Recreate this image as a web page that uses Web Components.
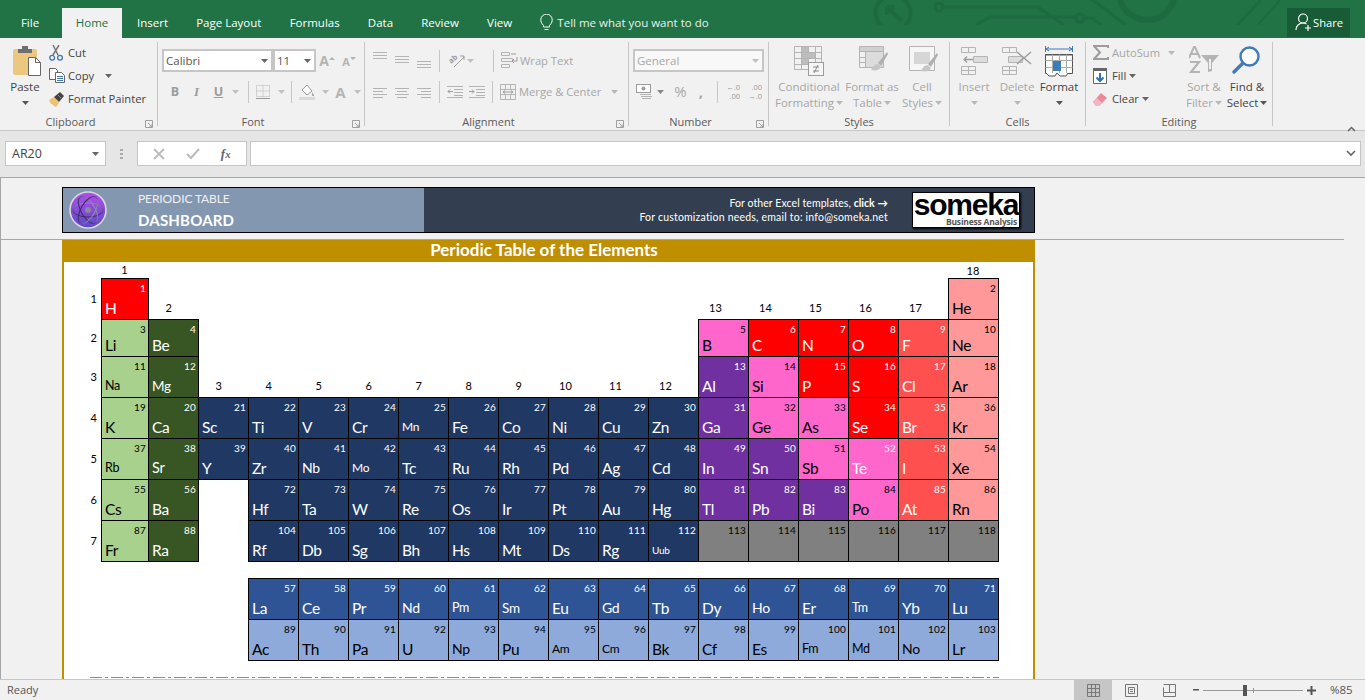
<!DOCTYPE html>
<html><head><meta charset="utf-8"><title>Periodic Table</title>
<style>html,body{margin:0;padding:0;width:1365px;height:700px;overflow:hidden;background:#f1f1f1}</style>
</head><body>
<x-app></x-app>
<script>
const UI="'Open Sans','Noto Sans',sans-serif", CAL="Lato,'Open Sans',sans-serif";
const G='#b4b4b4', GD='#9c9c9c';
function def(name,css,html){
  customElements.define(name,class extends HTMLElement{
    constructor(){super();this.attachShadow({mode:'open'});}
    connectedCallback(){
      const h=typeof html==='function'?html(this):html;
      this.shadowRoot.innerHTML='<style>'+css+'</style>'+h;
    }
  });
}
const svg=(w,h,body,extra='')=>`<svg width="${w}" height="${h}" viewBox="0 0 ${w} ${h}" ${extra}>${body}</svg>`;
const lines=(arr,c=G)=>arr.map(a=>`<path d="M${a[0]} ${a[1]+.5}H${a[2]}" stroke="${c}" fill="none"/>`).join('');
const caret=(c='#777')=>svg(7,4,`<path d="M0 0h7L3.5 4z" fill="${c}"/>`);
const I={
 paste:svg(29,31,`<rect x="0" y="3" width="24" height="26" rx="2" fill="#ecc77f"/><path d="M5 3h14v4H5z" fill="#6e6e6e"/><path d="M9 0h6v4H9z" fill="#6e6e6e"/><path d="M15.5 11.5h7l5 5v13h-12z" fill="#fff" stroke="#666"/><path d="M22.5 11.5v5h5" fill="none" stroke="#666"/>`,'style="margin-left:4px"'),
 cut:svg(15,16,`<path d="M4 0l5 10M10 0L4 10" stroke="#777" stroke-width="1.5" fill="none"/><circle cx="3.2" cy="12.8" r="2.4" fill="none" stroke="#3d78b8" stroke-width="1.3"/><circle cx="11" cy="12.8" r="2.4" fill="none" stroke="#3d78b8" stroke-width="1.3"/>`),
 copy:svg(16,15,`<path d="M.5.5h6l2 2v9h-8z" fill="#fff" stroke="#666"/><path d="M6.5 4.5h6l3 3v7h-9z" fill="#fff" stroke="#666"/><path d="M8 8.5h6M8 10.5h6M8 12.5h6" stroke="#3d78b8"/>`),
 painter:svg(16,16,`<path d="M0 9l5-3 5 6-3 4-2-1-2-2-1 0z" fill="#eec26f"/><path d="M5 6l6-5 4 4-5 6z" fill="#444"/><path d="M9 4l3 3" stroke="#888"/>`),
 growA:`<span style="font:700 14px ${UI};color:${G}">A</span>`,
 bold:`<span style="font:700 12.5px ${UI};color:${GD}">B</span>`,
 ital:`<span style="font:italic 700 13px 'Liberation Serif',serif;color:${GD}">I</span>`,
 und:`<span style="font:700 12.5px ${UI};color:${GD};text-decoration:underline">U</span>`,
 borders:svg(14,14,`<path d="M.5.5h13v11H.5zM7 .5v11M.5 6h13" fill="none" stroke="${G}" stroke-dasharray="1 1"/><path d="M0 13.5h14" stroke="#999"/>`),
 fill:svg(16,16,`<path d="M3 6l5-5 5 6-5 4z" fill="#fff" stroke="#999"/><path d="M13 8l2 3v1h-2z" fill="#aaa"/><path d="M0 13h16v3H0z" fill="#d9d9d9"/>`),
 fontA:`<span style="font:700 15px ${UI};color:${G}">A</span>`,
 orient:svg(17,15,`<text transform="translate(3 11) rotate(-40)" style="font:700 7.5px ${UI}" fill="${GD}">ab</text><path d="M6 14L16 4M12 3h4v4" stroke="${GD}" fill="none"/>`,'style="overflow:visible"'),
 wrap:svg(17,18,`<path d="M.5.5h8v3h-8zM.5 6.5h11v3H.5zM.5 12.5h8v3h-8z" fill="none" stroke="${G}"/><path d="M10 2h5M16 5v4h-5M13 7l-2 2 2 2" stroke="${GD}" fill="none"/>`),
 merge:svg(16,16,`<path d="M.5.5h15v15H.5zM.5 5.5h15M.5 10.5h15M5.5.5v5M10.5.5v5M5.5 10.5v5M10.5 10.5v5" fill="none" stroke="${G}"/><path d="M3 8h10M3 8l2-1.5M3 8l2 1.5M13 8l-2-1.5M13 8l-2 1.5" stroke="${GD}" fill="none"/>`),
 outdent:svg(16,12,lines([[0,0,16],[7,3,16],[7,6,16],[7,9,16],[0,11,16]])+`<path d="M6 5.5H1M3 3.5l-2 2 2 2" stroke="${GD}" fill="none"/>`),
 indent:svg(16,12,lines([[0,0,16],[7,3,16],[7,6,16],[7,9,16],[0,11,16]])+`<path d="M0 5.5h5M3 3.5l2 2-2 2" stroke="${GD}" fill="none"/>`),
 cur:svg(17,16,`<rect x=".5" y=".5" width="14" height="8" fill="#fff" stroke="${GD}"/><circle cx="7.5" cy="4.5" r="2" fill="${GD}"/><path d="M4 10.5h11M5 12.5h11M6 14.5h9" stroke="${G}"/>`),
 cf:svg(30,31,`<g fill="none" stroke="${G}"><path d="M.5.5h27v23H.5zM7.5.5v23M14.5.5v23M21.5.5v23M.5 6.5h27M.5 12.5h27M.5 18.5h27"/></g><path d="M8 1h6v5H8zM8 7h13v5H8zM8 13h6v5H8z" fill="#bdbdbd"/><rect x="14.5" y="16.5" width="15" height="13" fill="#f5f5f5" stroke="${GD}"/><path d="M19 21h6M19 25h6M24 19l-4 8" stroke="#888" fill="none"/>`),
 fat:svg(30,31,`<g fill="none" stroke="${G}"><path d="M.5.5h24v21H.5zM6.5.5v21M12.5.5v21M18.5.5v21M.5 5.5h24M.5 11.5h24M.5 16.5h24"/></g><path d="M1 1h23v4H1z" fill="#d0d0d0"/><path d="M7 6h17v15H7z" fill="#dcdcdc"/><path d="M29 8l-1-2-9 11 3 3z" fill="#b0b0b0"/><path d="M19 18c-4 0-5 3-7 6 5 1 9 0 10-3z" fill="#c6c6c6"/>`,'style="margin-left:4px"'),
 cs:svg(30,31,`<path d="M.5.5h25v24H.5z" fill="#f6f6f6" stroke="${G}"/><path d="M5 6h16v12H5z" fill="#d6d6d6"/><path d="M29 9l-1-2-9 11 3 3z" fill="#b0b0b0"/><path d="M19 19c-4 0-5 3-7 6 5 1 9 0 10-3z" fill="#c6c6c6"/>`,'style="margin-left:4px"'),
 ins:svg(28,29,`<g fill="none" stroke="${G}"><path d="M1.5 1.5h14v5h-14zM8.5 1.5v5M1.5 20.5h14v8h-14zM1.5 24.5h14M8.5 20.5v8"/><path d="M13.5 10.5h14v6h-14zM18.5 10.5v6M23.5 10.5v6"/></g><path d="M14 11h13v5H14z" fill="#ddd"/><path d="M13 13.5H4M7 10.5l-3 3 3 3" stroke="${GD}" stroke-width="1.3" fill="none"/>`),
 del:svg(30,29,`<g fill="none" stroke="${G}"><path d="M.5 1.5h14v5H.5zM7.5 1.5v5M.5 20.5h14v8H.5zM.5 24.5h14M7.5 20.5v8M6.5 10.5h14v6h-14z"/></g><path d="M7 11h13v5H7z" fill="#ddd"/><path d="M15 6l14 12M29 6L15 18" stroke="${GD}" stroke-width="1.5" fill="none"/>`),
 fmt:svg(29,31,`<path d="M1 3h26M1 3l3-2M1 3l3 2M27 3l-3-2M27 3l-3 2M.5 0v6M27.5 0v6" stroke="#3d78b8" fill="none"/><path d="M.5 8.5h27v19H.5z" fill="#fff" stroke="#555"/><path d="M.5 8.5h27v1H.5z" fill="#555"/><path d="M.5 14.5h27M.5 21.5h27M7.5 8.5v19M14.5 8.5v19M21.5 8.5v19" stroke="#aaa" fill="none"/><rect x="8" y="15" width="8" height="10" fill="#3f7ab9"/><path d="M1 27l3 3h6l2-3M12 27l3 3h6l2-3" fill="#fff" stroke="#555"/>`),
 sum:svg(16,15,`<path d="M15 3V1H1l6 6.5L1 14h14v-2" fill="none" stroke="${GD}" stroke-width="2"/>`),
 filld:svg(14,16,`<path d="M.5.5h13v15H.5z" fill="#fff" stroke="#666"/><path d="M0 0h14v3H0z" fill="#666"/><path d="M7 5v8M3.5 9.5L7 13l3.5-3.5" stroke="#2f6fb3" stroke-width="2" fill="none"/>`),
 eraser:svg(14,14,`<path d="M0 10l8-9 6 5-8 8H3z" fill="#ea8a9a"/><path d="M0 10l4-4 5 5-3 3H3z" fill="#f3b7c1"/>`),
 sort:svg(30,28,`<path d="M0 12L5 1h1l5 11M2.5 8h6" stroke="${G}" stroke-width="2" fill="none"/><path d="M1 16h9L2 26h9" stroke="${G}" stroke-width="2.2" fill="none"/><path d="M12 9h18l-7 8v8l-4 1v-9z" fill="${G}"/><path d="M20 13h2v10h-2z" fill="#f1f1f1"/>`),
 find:svg(28,28,`<circle cx="17.5" cy="10.5" r="9" fill="#fff" stroke="#3f7ab9" stroke-width="2.4"/><path d="M10.5 17.5L2 26" stroke="#3f7ab9" stroke-width="3.4" stroke-linecap="round"/>`,'style="margin-right:3px"')
};
const ALIGN=(a)=>svg(14,23,lines(a));
/* ---- tab bar ---- */
def('x-tabbar',`
:host{display:flex;height:38px;background:#217346;position:relative;overflow:hidden;font:11.5px ${UI};color:#fff;flex:none}
.bg{position:absolute;left:0;top:0}
.tab{height:30px;margin-top:8px;padding:0 14.1px 1px;display:flex;align-items:center;line-height:1;position:relative;box-sizing:border-box}
.file{width:62px;justify-content:center;padding:0 2px 1px 0}
.home{width:60px;background:#f1f1f1;color:#217346;justify-content:center;padding:0 0 1px}
.insert{padding-left:15px}
.tell{gap:4px;color:#e8f1ec}
.share{margin-left:auto;margin-right:15px;width:63px;height:29px;background:#185c37;display:flex;align-items:center;gap:1px;padding:0 0 1px 8px;box-sizing:border-box;margin-top:8px;position:relative;font-size:11.2px}
`,`
<svg class="bg" width="1365" height="25" viewBox="0 0 1365 25" fill="none" stroke="#1e6a40" stroke-width="3">
<circle cx="893" cy="13" r="17.5" stroke-width="4"/><path d="M887 7h8M887 7v8M887 7l15 14" stroke-width="4"/>
<circle cx="939" cy="7" r="4"/><path d="M943 7h95l26 18"/><path d="M976 25l14-8h85"/><circle cx="1080" cy="18" r="4"/><path d="M1084 18h8l9 7"/>
<path d="M1090-2l36 27M1140-2l-18 0"/><circle cx="1147" cy="-8" r="28" stroke-width="6"/><path d="M1237 25l24-25"/><path d="M1258 25l22-25" stroke-width="2"/>
</svg>
<div class="tab file">File</div><div class="tab home">Home</div><div class="tab insert">Insert</div><div class="tab">Page Layout</div><div class="tab">Formulas</div><div class="tab">Data</div><div class="tab">Review</div><div class="tab">View</div>
<div class="tab tell">${svg(13,17,`<path d="M3.5 11.5C1 9 .8 7 .8 5.8a5.7 5.7 0 0 1 11.4 0c0 1.2-.2 3.2-2.7 5.7v1.500h-6zM4.500 15.500h4" fill="none" stroke="#fff"/>`)}<span>Tell me what you want to do</span></div>
<div class="share">${svg(17,18,`<circle cx="8" cy="5.5" r="4.5" fill="none" stroke="#fff" stroke-width="1.2"/><path d="M1 17c0-4 3-7 7-7 1.5 0 2.5.4 3.5 1" fill="none" stroke="#fff" stroke-width="1.2"/><path d="M13 12v6M10 15h6" stroke="#fff" stroke-width="1.2"/>`)}<span>Share</span></div>
`);
/* ---- ribbon pieces ---- */
def('r-group',`
:host{display:flex;flex-direction:column;height:84px;border-right:1px solid #c6c6c6;box-sizing:border-box;flex:none;position:relative}
.c{flex:1;min-height:0;display:flex}
.l{height:13px;text-align:center;font:11px/13px ${UI};color:#5a5a5a;position:relative;top:2px;white-space:nowrap}
.has{padding-right:16px}
.lch{position:absolute;right:4px;bottom:-6px}
`,h=>`<div class="c"><slot></slot></div><div class="l ${h.hasAttribute('launch')?'has':''}">${h.getAttribute('label')}</div>${h.hasAttribute('launch')?`<span class="lch">${svg(8,8,`<path d="M.5.5h7v7M.5.5v7h7M3 3l4 4M7 4v3H4" fill="none" stroke="#a0a0a0"/>`)}</span>`:''}`);
def('r-big',`
:host{display:flex;flex-direction:column;align-items:center;flex:none;font:11.5px/16px ${UI};color:#a6a6a6;white-space:nowrap}
:host([on]){color:#444}
.i{height:30px;margin-top:4px;margin-bottom:3px;display:flex;align-items:flex-start;justify-content:center}
.t{text-align:center}
.t>div{height:16px;display:flex;align-items:center;justify-content:center}
.car{display:flex;margin-left:2px}
`,h=>{const c=h.getAttribute('on')!==null?'#555':'#b8b8b8';
 const a=(h.getAttribute('label')||'').split('|');
 const cs=`<span class="car">${caret(c)}</span>`;
 return `<div class="i"><slot></slot></div><div class="t"><div>${a[0]}</div>${a[1]!==undefined?`<div><span>${a[1]}</span>${cs}</div>`:`<div>${cs}</div>`}</div>`});
def('r-small',`
:host{display:flex;align-items:center;height:23px;font:11.2px/23px ${UI};color:#444;white-space:nowrap;flex:none}
:host([off]){color:#a6a6a6}
.i{width:var(--iw,19px);display:flex;align-items:center;flex:none}
.car{margin-left:var(--cm,5px);display:flex}
`,h=>`<span class="i"><slot></slot></span><span>${h.getAttribute('label')}</span>${h.hasAttribute('car')?`<span class="car">${caret(h.hasAttribute('off')?'#b8b8b8':'#666')}</span>`:''}`);
def('r-combo',`
:host{display:flex;align-items:center;justify-content:space-between;height:23px;background:#fff;border:1px solid #c6c6c6;outline:1px solid #c6c6c6;outline-offset:-2px;box-sizing:border-box;padding:0 4px 0 3px;font:11.5px ${UI};color:#555;flex:none}
:host([off]){background:#f8f8f8;color:#a6a6a6}
`,h=>`<span>${h.getAttribute('label')}</span>${caret(h.hasAttribute('off')?'#c0c0c0':'#666')}`);
def('x-ribbon',`
:host{display:flex;height:93px;box-sizing:border-box;background:#f1f1f1;border-bottom:1px solid #c6c6c6;padding-top:4px;flex:none;position:relative}
.col{display:flex;flex-direction:column;margin-top:-1px}
.row{display:flex;align-items:center;height:23px}
.two{display:flex;flex-direction:column;gap:8px;padding-top:7px}
.sep{width:1px;height:22px;background:#c6c6c6;flex:none}
.ic{display:flex;justify-content:center;align-items:center;height:23px;flex:none}
.pc{color:#a8a8a8;font:15px ${UI};line-height:23px;text-align:center}
.dec{font:7.5px/9px ${UI};color:#9a9a9a;display:flex;flex-direction:column;align-items:flex-end;width:15px}
.up{position:absolute;right:9px;top:80px}
`,`
<r-group label="Clipboard" launch style="width:158px">
 <r-big on label="Paste" style="width:40px;margin:0 0 0 5px">${I.paste}</r-big>
 <div class="col" style="margin-left:4px">
  <r-small label="Cut">${I.cut}</r-small>
  <r-small label="Copy" car style="--cm:11px">${I.copy}</r-small>
  <r-small label="Format Painter">${I.painter}</r-small>
 </div>
</r-group>
<r-group label="Font" launch style="width:207px">
 <div class="two" style="padding-left:4px">
  <div class="row"><r-combo label="Calibri" style="width:111px"></r-combo><r-combo label="11" style="width:43px"></r-combo>
   <span class="ic" style="width:22px">${I.growA}${svg(6,9,`<path d="M0 4l3-3 3 3z" fill="${G}"/>`)}</span><span class="ic" style="width:22px"><span style="font:700 11px ${UI};color:${G};padding-top:2px">A</span>${svg(6,9,`<path d="M0 1h6L3 4z" fill="${G}"/>`)}</span></div>
  <div class="row" style="padding-left:4px">
   <span class="ic" style="width:18px">${I.bold}</span><span class="ic" style="width:25px">${I.ital}</span><span class="ic" style="width:19px">${I.und}</span><span class="ic" style="width:15px">${caret('#c0c0c0')}</span>
   <span class="ic" style="width:5px"></span><span class="sep"></span>
   <span class="ic" style="width:28px">${I.borders}</span><span class="ic" style="width:8px">${caret('#c0c0c0')}</span><span class="ic" style="width:6px"></span><span class="sep"></span>
   <span class="ic" style="width:30px">${I.fill}</span><span class="ic" style="width:7px">${caret('#c0c0c0')}</span><span class="ic" style="width:23px">${I.fontA}</span><span class="ic" style="width:11px">${caret('#c0c0c0')}</span>
  </div>
 </div>
</r-group>
<r-group label="Alignment" launch style="width:264px">
 <div class="two" style="padding-left:8px">
  <div class="row">
   ${ALIGN([[0,3,14],[0,6,14],[0,9,14]])}<span style="width:8px"></span>${ALIGN([[0,7,14],[0,10,14],[0,13,14]])}<span style="width:8px"></span>${ALIGN([[0,12,14],[0,15,14],[0,18,14]])}
   <span class="sep" style="margin-left:8px"></span><span class="ic" style="width:17px;margin-left:8px">${I.orient}</span><span class="ic" style="width:7px;margin-left:2px">${caret('#c0c0c0')}</span><span class="sep" style="margin-left:19px"></span>
   <r-small off label="Wrap Text" style="margin-left:7px">${I.wrap}</r-small>
  </div>
  <div class="row">
   ${ALIGN([[0,8,14],[0,11,10],[0,14,14],[0,17,10]])}<span style="width:8px"></span>${ALIGN([[0,8,14],[2,11,12],[0,14,14],[2,17,12]])}<span style="width:8px"></span>${ALIGN([[0,8,14],[4,11,14],[0,14,14],[4,17,14]])}
   <span class="sep" style="margin-left:8px"></span><span class="ic" style="width:16px;margin-left:7px">${I.outdent}</span><span class="ic" style="width:16px;margin-left:6px">${I.indent}</span><span class="sep" style="margin-left:7px"></span>
   <r-small off label="Merge &amp; Center" car style="margin-left:7px;--cm:10px">${I.merge}</r-small>
  </div>
 </div>
</r-group>
<r-group label="Number" launch style="width:140px">
 <div class="two" style="padding-left:4px">
  <r-combo off label="General" style="width:131px"></r-combo>
  <div class="row" style="padding-left:3px">
   <span class="ic" style="width:17px">${I.cur}</span><span class="ic" style="width:14px">${caret('#888')}</span><span class="ic pc" style="width:27px">%</span><span class="ic pc" style="width:14px;font-weight:700">,</span>
   <span class="ic" style="width:9px"></span><span class="sep"></span>
   <span class="ic dec" style="margin-left:7px"><span>←.0</span><span>.00</span></span><span class="ic dec" style="margin-left:7px"><span>.00</span><span>→.0</span></span>
  </div>
 </div>
</r-group>
<r-group label="Styles" style="width:181px">
 <r-big label="Conditional|Formatting" style="width:64px;margin-left:8px">${I.cf}</r-big>
 <r-big label="Format as|Table" style="width:54px;margin-left:4px">${I.fat}</r-big>
 <r-big label="Cell|Styles" style="width:42px;margin-left:2px">${I.cs}</r-big>
</r-group>
<r-group label="Cells" style="width:136px">
 <r-big label="Insert" style="width:40px;margin-left:4px">${I.ins}</r-big>
 <r-big label="Delete" style="width:42px;margin-left:2px">${I.del}</r-big>
 <r-big on label="Format" style="width:42px;margin-left:0">${I.fmt}</r-big>
</r-group>
<r-group label="Editing" style="width:187px">
 <div class="col" style="margin-left:7px;width:93px">
  <r-small off label="AutoSum" car style="--cm:8px">${I.sum}</r-small>
  <r-small label="Fill" car style="--cm:3px">${I.filld}</r-small>
  <r-small label="Clear" car style="--cm:3px">${I.eraser}</r-small>
 </div>
 <r-big label="Sort &amp;|Filter" style="width:36px">${I.sort}</r-big>
 <r-big on label="Find &amp;|Select" style="width:40px;margin-left:5px">${I.find}</r-big>
</r-group>
<span class="up">${svg(9,6,`<path d="M1 5l3.5-3.5L8 5" fill="none" stroke="#666" stroke-width="1.5"/>`)}</span>
`);
/* ---- formula bar ---- */
def('x-formula',`
:host{display:flex;align-items:flex-start;height:46px;box-sizing:border-box;padding:10px 4px 0 5px;background:#e6e6e6;flex:none}
.b{height:25px;box-sizing:border-box;background:#fff;border:1px solid #c6c6c6;display:flex;align-items:center;flex:none}
.name{width:101px;padding:0 6px 0 6px;justify-content:space-between;font:12.5px ${UI};color:#444}
.dots{width:31px;display:flex;justify-content:center;padding-top:7px;flex:none}
.fx{width:110px;justify-content:space-around;padding:0 5px}
.in{flex:1;margin-left:3px;justify-content:flex-end;padding-right:4px}
i{font:italic 700 13px 'Liberation Serif',serif;color:#666}
`,`<div class="b name"><span>AR20</span>${caret('#666')}</div>
<div class="dots">${svg(3,12,`<path d="M0 1h3v2H0zM0 5h3v2H0zM0 9h3v2H0z" fill="#aaa"/>`)}</div>
<div class="b fx">${svg(12,12,`<path d="M1 1l10 10M11 1L1 11" stroke="#bbb" stroke-width="1.8" fill="none"/>`)}${svg(14,12,`<path d="M1 6l4 4 8-9" stroke="#bbb" stroke-width="2" fill="none"/>`)}<i>f<small>x</small></i></div>
<div class="b in">${svg(10,7,`<path d="M1 1l4 4 4-4" stroke="#666" stroke-width="1.6" fill="none"/>`)}</div>`);
/* ---- sheet ---- */
def('x-logo',`:host{display:block;width:38px;height:38px;flex:none}`,`
<svg width="38" height="38" viewBox="0 0 38 38"><defs><linearGradient id="g" x1="0" y1="0" x2="0" y2="1"><stop offset="0" stop-color="#b64cf2"/><stop offset="1" stop-color="#5b49c8"/></linearGradient><linearGradient id="s" gradientUnits="userSpaceOnUse" x1="0" y1="4" x2="0" y2="34"><stop offset="0" stop-color="#cfc8d6"/><stop offset=".6" stop-color="#4b3a78"/><stop offset="1" stop-color="#191534"/></linearGradient></defs>
<circle cx="19" cy="19" r="18" fill="url(#g)" stroke="#d9d9de" stroke-width="1.6"/>
<g fill="none" stroke="url(#s)" stroke-width="1.2"><ellipse cx="19" cy="19" rx="15" ry="7"/><ellipse cx="19" cy="19" rx="15" ry="7" transform="rotate(60 19 19)"/><ellipse cx="19" cy="19" rx="15" ry="7" transform="rotate(120 19 19)"/></g><circle cx="19" cy="19" r="3" fill="#8b8b95"/></svg>`);
def('x-brand',`
:host{display:flex;flex-direction:column;align-items:center;width:108px;height:36px;background:#fff;border:1px solid #000;box-sizing:border-box;box-shadow:1px 1px 2px #000;color:#000;flex:none}
.s{font:700 30px/24px 'Liberation Sans',sans-serif;letter-spacing:-1.2px;height:24px;white-space:nowrap}
.b{font:700 8.5px/10px ${UI};color:#555;letter-spacing:-.2px;align-self:flex-end;padding-right:2px;white-space:nowrap}
`,`<div class="s">someka</div><div class="b">Business Analysis</div>`);
def('x-banner',`
:host{display:flex;height:46px;box-sizing:border-box;border:1px solid #000;background:#333f50;color:#fff;flex:none;width:973px}
.l{width:361px;background:#8497b0;display:flex;align-items:center;padding-left:6px;box-sizing:border-box;flex:none}
.t{margin-left:31px;display:flex;flex-direction:column;font-family:${CAL}}
.t1{font-size:12px;line-height:16px;color:#eef1f5;letter-spacing:-.1px;margin-top:2px}
.t2{font-size:15px;line-height:22px;font-weight:700;letter-spacing:.2px;margin-top:2px}
.r{flex:1;display:flex;align-items:center;justify-content:flex-end;padding-right:14px;gap:24px}
.m{font:10.5px/14px ${CAL};text-align:right;letter-spacing:.2px}
.m span{letter-spacing:.08px}
.m b{letter-spacing:0}
`,`<div class="l"><x-logo></x-logo><div class="t"><span class="t1">PERIODIC TABLE</span><span class="t2">DASHBOARD</span></div></div>
<div class="r"><div class="m"><span>For other Excel templates, <b>click</b> <b>→</b></span><br>For customization needs, email to: info@someka.net</div><x-brand></x-brand></div>`);
def('pt-cell',`
:host{display:flex;flex-direction:column;justify-content:space-between;box-sizing:border-box;border:1px solid #000;margin:0 -1px -1px 0;padding:3px 2px 0 3px;overflow:hidden;font-family:${CAL};background:var(--bg);color:var(--fg);min-width:0;min-height:0}
.n{text-align:right;font-size:10px;line-height:13px;letter-spacing:.2px}
.s{font-size:var(--fs,15.5px);line-height:18px;height:18px;margin-bottom:2px;white-space:nowrap;letter-spacing:-.3px}
`,h=>`<div class="n">${h.getAttribute('n')}</div><div class="s">${h.getAttribute('s')}</div>`);
const T={a:['#a9d18e','#000'],e:['#375623','#fff'],t:['#1f3864','#fff'],l:['#2f5496','#fff'],c:['#8eaadb','#000'],g:['#808080','#000'],p:['#ff66cc','#000'],u:['#7030a0','#fff'],r:['#ff0000','#fff'],h:['#ff5050','#fff'],n:['#ff9999','#000']};
const rows=[
 [1,[1,'r','H',1],[18,'n','He',2]],
 [2,[1,'a','Li',3],[2,'e','Be',4],[13,'p','B',5],[14,'r','C',6],[15,'r','N',7],[16,'r','O',8],[17,'h','F',9],[18,'n','Ne',10]],
 [3,[1,'a','Na',11],[2,'e','Mg',12],[13,'u','Al',13],[14,'p','Si',14],[15,'r','P',15],[16,'r','S',16],[17,'h','Cl',17],[18,'n','Ar',18]]
];
const seq=(row,syms,start,firstCol,types)=>{const o=[row];syms.split(' ').forEach((s,i)=>o.push([firstCol+i,types(firstCol+i),s,start+i]));return o};
const mainT=(last)=>c=>c==1?'a':c==2?'e':c<=12?'t':last[c-13];
rows.push(seq(4,'K Ca Sc Ti V Cr Mn Fe Co Ni Cu Zn Ga Ge As Se Br Kr',19,1,mainT('upprhn')));
rows.push(seq(5,'Rb Sr Y Zr Nb Mo Tc Ru Rh Pd Ag Cd In Sn Sb Te I Xe',37,1,mainT('uupphn')));
const r6=[6,[1,'a','Cs',55],[2,'e','Ba',56]];seq(6,'Hf Ta W Re Os Ir Pt Au Hg Tl Pb Bi Po At Rn',72,4,mainT('uuuphn')).slice(1).forEach(x=>r6.push(x));rows.push(r6);
const r7=[7,[1,'a','Fr',87],[2,'e','Ra',88]];seq(7,'Rf Db Sg Bh Hs Mt Ds Rg Uub',104,4,()=>'t').slice(1).forEach(x=>r7.push(x));
[113,114,115,116,117,118].forEach((n,i)=>r7.push([13+i,'g','',n]));rows.push(r7);
rows.push(seq(8,'La Ce Pr Nd Pm Sm Eu Gd Tb Dy Ho Er Tm Yb Lu',57,4,()=>'l'));
rows.push(seq(9,'Ac Th Pa U Np Pu Am Cm Bk Cf Es Fm Md No Lr',89,4,()=>'c'));
const SZ={Na:12.5,Rb:12.5,Mo:12,Mn:12,Pm:12.5,Tm:12.5,Fm:12.5,Am:12,Cm:12,Md:12.5,Uub:10,Mg:13.5,Nb:14,Nd:14,Sm:13.5,Gd:14,Ho:14,No:14,Np:14,Sr:14.5};
const FG={Te:'#fff'};
def('x-table',`
:host{display:grid;grid-template-columns:37px 47px repeat(17,50px);grid-template-rows:16px 41px 37px 41px 41px 41px 41px 41px 17px 41px 41px;flex:none}
.g,.p{font:11px/14px ${CAL};color:#000;letter-spacing:.1px}
.g{text-align:right;padding-right:26px;align-self:end;padding-bottom:4px}
.c{text-align:center;padding:0}
.p{display:flex;align-items:center;justify-content:flex-end;padding-right:4px}
`,()=>{
 let h='';
 rows.forEach(r=>{const row=r[0];const tr=row<=7?row+1:row+2;
  if(row<=7)h+=`<div class="p" style="grid-column:1;grid-row:${tr}">${row}</div>`;
  r.slice(1).forEach(e=>{const[c,t,s,n]=e;const[bg,fg]=T[t];
   h+=`<pt-cell n="${n}" s="${s}" style="grid-column:${c+1};grid-row:${tr};--bg:${bg};--fg:${FG[s]||fg};${SZ[s]?`--fs:${SZ[s]}px`:''}"></pt-cell>`;});
 });
 const lbl=(n,c,tr)=>`<div class="g" style="grid-column:${c+1};grid-row:${tr}">${n}</div>`;
 h+=`<div class="g c" style="grid-column:2;grid-row:1;padding-bottom:1px">1</div><div class="g c" style="grid-column:19;grid-row:1;padding-bottom:0">18</div>`;
 h+=lbl(2,2,2);for(let i=13;i<=17;i++)h+=lbl(i,i,2);for(let i=3;i<=12;i++)h+=lbl(i,i,4);
 return h;
});
def('x-page',`
:host{display:flex;flex-direction:column;width:973px;box-sizing:border-box;background:#fff;border-left:2px solid #bf8f00;border-right:2px solid #bf8f00;flex:none;height:100%}
.bar{height:22px;margin:0 -2px;padding-right:9px;background:#bf8f00;color:#fff;font:700 17px/20px ${CAL};text-align:center;flex:none}
.dash{margin:17px 0 0 26px;height:1px;display:block;flex:none}
`,`<div class="bar">Periodic Table of the Elements</div><x-table></x-table>
<svg class="dash" width="909" height="1"><path d="M0 .5H909" stroke="#bf8f00" stroke-dasharray="12 3 3 3"/></svg>`);
def('x-sheet',`
:host{display:flex;flex-direction:column;height:502px;box-sizing:border-box;border-top:1px solid #a6a6a6;border-left:1px solid #a6a6a6;background:#f1f1f1;flex:none;overflow:hidden}
.top{height:62px;box-sizing:border-box;padding:9px 0 0 61px;position:relative;flex:none;width:1343px;border-bottom:1px solid #a6a6a6}
.body{flex:1;padding-left:61px;min-height:0}
`,`<div class="top"><x-banner></x-banner></div><div class="body"><x-page></x-page></div>`);
def('x-status',`
:host{display:flex;align-items:stretch;height:21px;box-sizing:border-box;border-top:1px solid #c6c6c6;background:#f1f1f1;font:11px/20px ${UI};color:#555;flex:none}
.r{padding-left:7px;width:1074px;box-sizing:border-box}
.v{width:38px;display:flex;align-items:center;justify-content:center;flex:none}
.on{background:#c6c6c6}
.z{display:flex;align-items:center;margin-left:5px}
.tr{width:100px;height:1px;background:#999;margin:0 4px 0 3px;display:flex;align-items:center}
.th{width:4px;height:11px;background:#555;margin-left:40px;flex:none}
.tk{width:1px;height:5px;background:#999;margin-left:6px}
.pc{margin-left:14px;font-size:11.5px}
`,`<div class="r">Ready</div>
<div class="v on">${svg(13,13,`<path d="M.5.5h12v12H.5zM4.5.5v12M8.5.5v12M.5 4.5h12M.5 8.5h12" fill="none" stroke="#777"/>`)}</div>
<div class="v">${svg(13,13,`<path d="M.5.5h12v12H.5z" fill="none" stroke="#777"/><path d="M3.5 3.5h6v6h-6z" fill="none" stroke="#777"/><path d="M5 5.5h3M5 7.5h3" stroke="#777"/>`)}</div>
<div class="v">${svg(13,13,`<path d="M.5 3.5v9h12v-12h-12M.5 8.5h12M6.5.5v8" fill="none" stroke="#777"/>`)}</div>
<div class="z">${svg(7,3,`<path d="M0 .5h6" stroke="#555" stroke-width="2"/>`)}<div class="tr"><span class="th"></span><span class="tk"></span></div>${svg(9,9,`<path d="M0 4.5h9M4.5 0v9" stroke="#555" stroke-width="2"/>`)}<span class="pc">%85</span></div>`);
def('x-app',`:host{display:flex;flex-direction:column;width:1365px;height:700px;overflow:hidden;background:#f1f1f1}`,
`<x-tabbar></x-tabbar><x-ribbon></x-ribbon><x-formula></x-formula><x-sheet></x-sheet><x-status></x-status>`);
</script>
</body></html>
